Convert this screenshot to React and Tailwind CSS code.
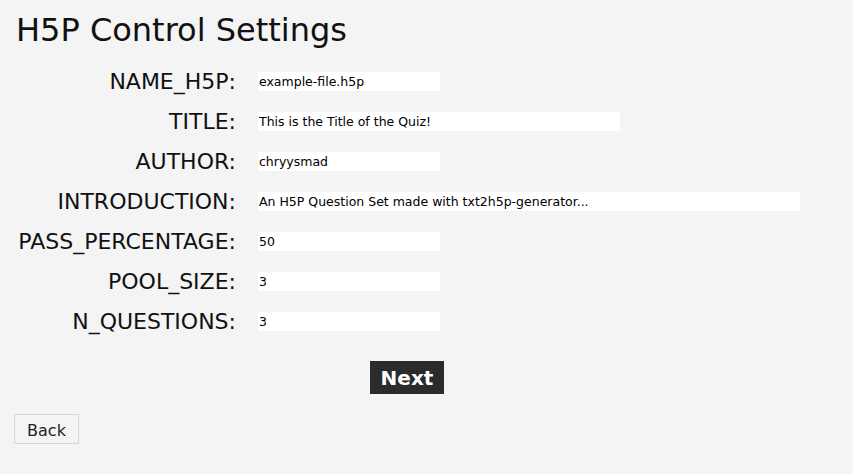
import React from 'react';

const fields = [
  { name: 'NAME_H5P', value: 'example-file.h5p', width: 'w-[182px]' },
  { name: 'TITLE', value: 'This is the Title of the Quiz!', width: 'w-[362px]' },
  { name: 'AUTHOR', value: 'chryysmad', width: 'w-[182px]' },
  { name: 'INTRODUCTION', value: 'An H5P Question Set made with txt2h5p-generator...', width: 'w-[542px]' },
  { name: 'PASS_PERCENTAGE', value: '50', width: 'w-[182px]' },
  { name: 'POOL_SIZE', value: '3', width: 'w-[182px]' },
  { name: 'N_QUESTIONS', value: '3', width: 'w-[182px]' },
];

export default function App() {
  return (
    <div className="min-h-[474px] w-full bg-[#f4f4f4] text-[#111] font-['DejaVu_Sans',sans-serif]">
      <div className="px-[14px] pt-[12px]">
        <h1 className="ml-[2px] text-[32px] leading-[37px] font-normal">H5P Control Settings</h1>

        {/* settings form */}
        <form className="mt-[12px] w-[786px]" onSubmit={(e) => e.preventDefault()}>
          {fields.map((f) => (
            <div key={f.name} className="flex h-[40px] items-center">
              <label className="w-[224px] pr-[2px] text-right text-[22px] leading-[25px] whitespace-nowrap">{f.name}:</label>
              <input
                type="text"
                defaultValue={f.value}
                className={`ml-[20px] h-[19px] ${f.width} bg-white px-[1px] text-[12.5px] text-black outline-none`}
              />
            </div>
          ))}

          <div className="mt-[20px] flex justify-center">
            <button type="submit" className="h-[33px] w-[74px] bg-[#2b2b2b] text-[20px] font-bold leading-none text-white">
              Next
            </button>
          </div>
        </form>

        <button className="mt-[20px] h-[30px] w-[65px] border border-[#d6d6d6] bg-[#f4f4f4] pt-[3px] text-[16px] leading-none text-[#222]">
          Back
        </button>
      </div>
    </div>
  );
}
